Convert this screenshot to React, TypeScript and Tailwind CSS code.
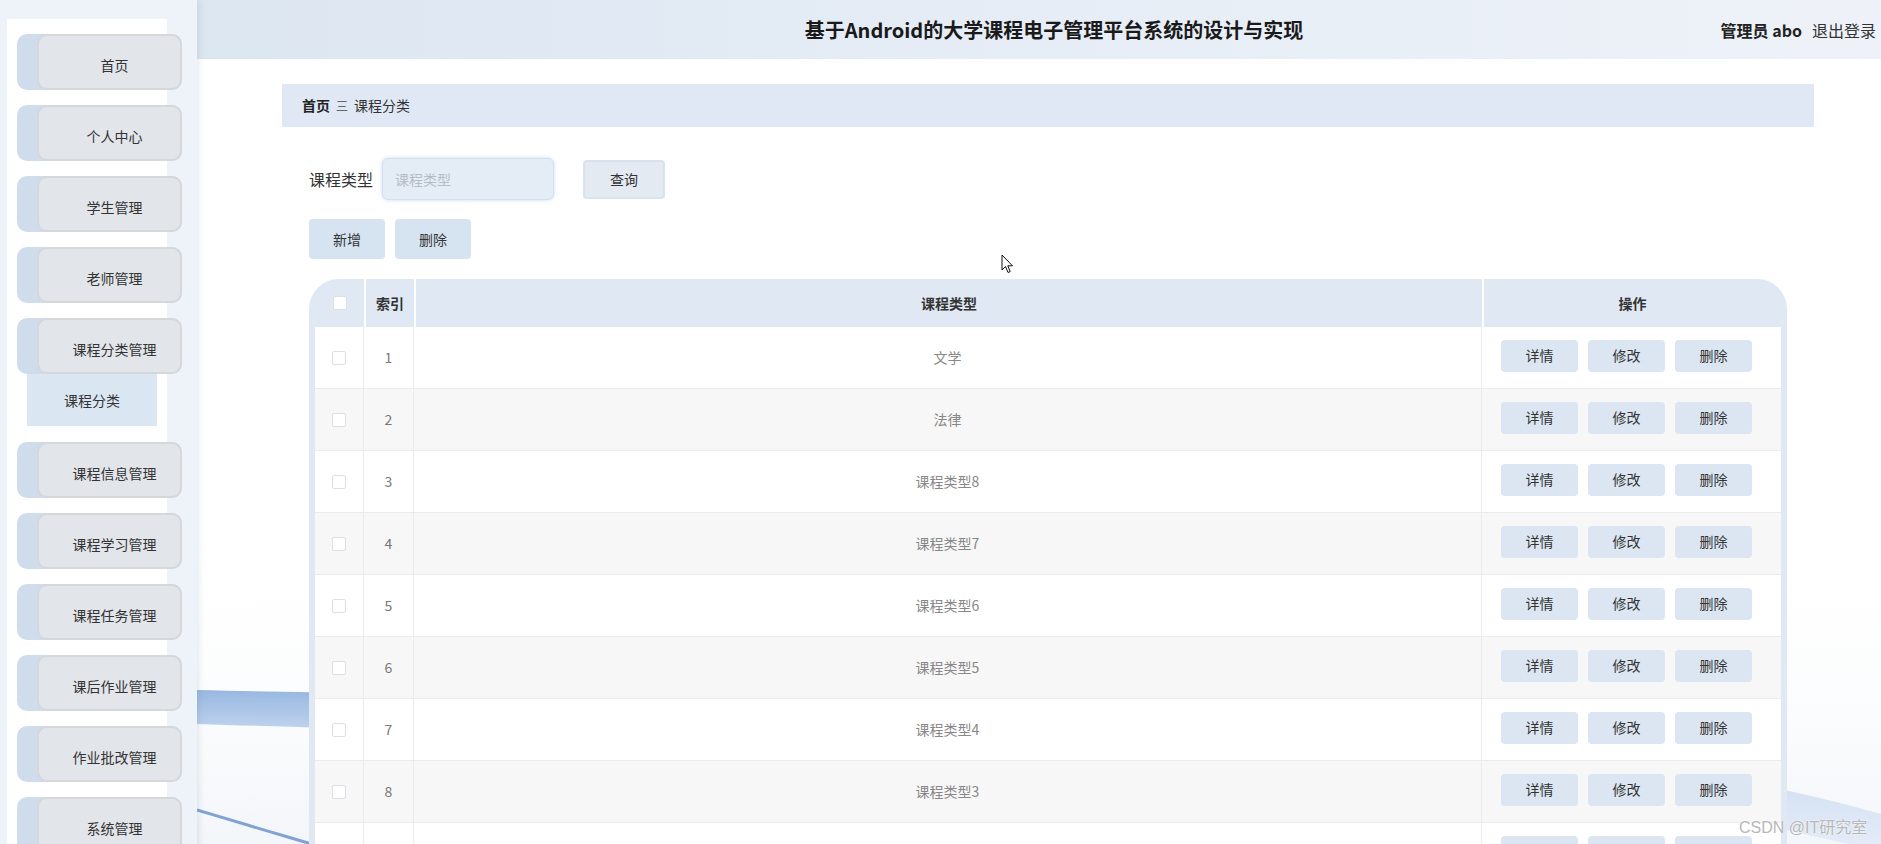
import React from 'react';

const menus = [
  '首页',
  '个人中心',
  '学生管理',
  '老师管理',
  '课程分类管理',
  '课程信息管理',
  '课程学习管理',
  '课程任务管理',
  '课后作业管理',
  '作业批改管理',
  '系统管理',
];

const rows = ['文学', '法律', '课程类型8', '课程类型7', '课程类型6', '课程类型5', '课程类型4', '课程类型3', '课程类型2', '课程类型1'];

function MenuItem({ label, first }: { label: string; first?: boolean }) {
  return (
    <div className={`${first ? '' : 'mt-[15px]'} ml-[10px] flex h-[56px] w-[165px] rounded-[10px] bg-[#cfdcec]`}>
      <div className="ml-[20px] flex flex-1 items-center justify-center rounded-[10px] border-2 border-[#d5d7db] bg-[#e2e5ea] pl-[10px] pt-[6px] text-[14px] text-[#333]">
        {label}
      </div>
    </div>
  );
}

function Checkbox() {
  return <span className="block h-[14px] w-[14px] rounded-[2px] border border-[#dcdfe6] bg-white" />;
}

function ActionBtn({ children }: { children: React.ReactNode }) {
  return (
    <button className="h-[32px] w-[77px] rounded-[4px] bg-[#dbe6f2] text-[14px] text-[#333]">
      {children}
    </button>
  );
}

export default function App() {
  return (
    <div className="relative flex min-h-screen w-full bg-white font-['Noto_Sans_CJK_SC',sans-serif] text-[#333]">
      {/* 侧边栏 */}
      <aside className="relative z-20 flex w-[197px] shrink-0 flex-col bg-[#eef3fa] pl-[7px] pt-[19px] shadow-[2px_0_6px_rgba(60,80,110,0.12)]">
        <div className="flex w-[160px] flex-1 flex-col bg-white pb-6 pt-[15px]">
          {menus.slice(0, 5).map((m, i) => (
            <MenuItem key={m} label={m} first={i === 0} />
          ))}
          <div className="ml-[20px] flex h-[52px] w-[130px] items-center justify-center bg-[#dbe6f3] text-[14px] text-[#333]">
            课程分类
          </div>
          <div className="h-[1px]" />
          {menus.slice(5).map((m) => (
            <MenuItem key={m} label={m} />
          ))}
        </div>
      </aside>

      {/* 主体 */}
      <div className="relative min-w-0 flex-1">
        {/* 背景波浪 */}
        <svg className="pointer-events-none absolute left-0 top-0 h-[960px] w-full" viewBox="0 0 1684 960" preserveAspectRatio="none">
          <defs>
            <linearGradient id="band" x1="0" y1="0" x2="0" y2="1">
              <stop offset="0" stopColor="#7fa6da" />
              <stop offset="0.3" stopColor="#bcd1ee" />
              <stop offset="1" stopColor="#e2eaf7" />
            </linearGradient>
            <linearGradient id="haze" x1="0" y1="0" x2="0" y2="1">
              <stop offset="0" stopColor="#ffffff" stopOpacity="0" />
              <stop offset="1" stopColor="#e9eef5" stopOpacity="1" />
            </linearGradient>
          </defs>
          <rect x="0" y="520" width="1684" height="440" fill="url(#haze)" />
          <path d="M0,690 C420,700 1250,690 1684,814 L1684,852 C1250,740 420,738 0,724 Z" fill="url(#band)" opacity="0.8" />
          <path d="M0,810 C120,846 240,880 360,920" stroke="#5b86c6" strokeWidth="3" fill="none" opacity="0.75" />
        </svg>

        <header className="relative grid h-[59px] grid-cols-[1fr_auto_1fr] items-center bg-gradient-to-r from-[#dce6f1] via-[#e6edf6] to-[#eef2f8]">
          <div />
          <h1 className="ml-[30px] text-[20px] font-bold text-[#1a1a1a]">基于Android的大学课程电子管理平台系统的设计与实现</h1>
          <div className="flex items-center justify-end pr-[5px] text-[16px]">
            <span className="font-bold text-[#222]">管理员 abo</span>
            <span className="ml-[10px] text-[#333]">退出登录</span>
          </div>
        </header>

        <main className="relative ml-[85px] mr-[67px] pt-[25px]">
          {/* 面包屑 */}
          <div className="flex h-[43px] items-center bg-[#dfe8f4] pl-[20px] text-[14px]">
            <span className="font-bold text-[#222]">首页</span>
            <span className="mx-[6px] text-[12px] text-[#666]">三</span>
            <span className="text-[#333]">课程分类</span>
          </div>

          {/* 搜索 */}
          <div className="mt-[31px] flex items-center pl-[27px]">
            <span className="text-[16px] text-[#333]">课程类型</span>
            <input
              placeholder="课程类型"
              className="ml-[9px] h-[42px] w-[172px] rounded-[6px] border border-[#d3e0f0] bg-[#e4ecf6] px-[12px] text-[14px] shadow-[0_0_4px_rgba(150,180,220,0.45)] outline-none placeholder:text-[#b4bcc7]"
            />
            <button className="ml-[29px] h-[39px] w-[82px] rounded-[4px] border-2 border-[#d9e3ef] bg-[#e4eaf2] text-[14px] text-[#333]">
              查询
            </button>
          </div>

          <div className="mt-[19px] flex gap-[10px] pl-[27px]">
            <button className="h-[40px] w-[76px] rounded-[4px] bg-[#d6e3f1] text-[14px] text-[#333]">新增</button>
            <button className="h-[40px] w-[76px] rounded-[4px] bg-[#d6e3f1] text-[14px] text-[#333]">删除</button>
          </div>

          {/* 表格 */}
          <div className="mx-[27px] mt-[20px] rounded-t-[30px] bg-[#dfe8f3] px-[6px] pb-[6px]">
            <div className="grid h-[48px] grid-cols-[49px_50px_1fr_299px] text-[14px] font-bold text-[#333]">
              <div className="flex items-center justify-center">
                <Checkbox />
              </div>
              <div className="flex items-center justify-center border-l-2 border-white">索引</div>
              <div className="flex items-center justify-center border-l-2 border-white">课程类型</div>
              <div className="flex items-center justify-center border-l-2 border-white">操作</div>
            </div>
            {rows.map((r, i) => (
              <div
                key={r}
                className={`grid h-[62px] grid-cols-[49px_50px_1fr_299px] border-b border-[#ebebeb] text-[14px] ${i % 2 ? 'bg-[#f7f7f7]' : 'bg-white'}`}
              >
                <div className="flex items-center justify-center border-r border-[#ebebeb]">
                  <Checkbox />
                </div>
                <div className="flex items-center justify-center border-r border-[#ebebeb] text-[#777]">{i + 1}</div>
                <div className="flex items-center justify-center border-r border-[#ebebeb] text-[#888]">{r}</div>
                <div className="flex items-center justify-center gap-[10px] pb-[4px] pr-[10px]">
                  <ActionBtn>详情</ActionBtn>
                  <ActionBtn>修改</ActionBtn>
                  <ActionBtn>删除</ActionBtn>
                </div>
              </div>
            ))}
          </div>
        </main>
      </div>

      {/* 鼠标指针 */}
      <svg className="pointer-events-none absolute left-[1001px] top-[254px] z-30" width="13" height="20" viewBox="0 0 13 20">
        <path d="M1,1 L1,16 L4.5,12.5 L7,18.5 L9.2,17.6 L6.8,11.8 L11.5,11.8 Z" fill="#fff" stroke="#111" strokeWidth="1" strokeLinejoin="round" />
      </svg>

      {/* 水印 */}
      <div className="pointer-events-none absolute left-[1739px] top-[816px] z-30 whitespace-nowrap font-['Liberation_Sans','Noto_Sans_CJK_SC',sans-serif] text-[16px] text-[#b8b8b8] [text-shadow:0_0_2px_#fff]">
        CSDN @IT研究室
      </div>
    </div>
  );
}
